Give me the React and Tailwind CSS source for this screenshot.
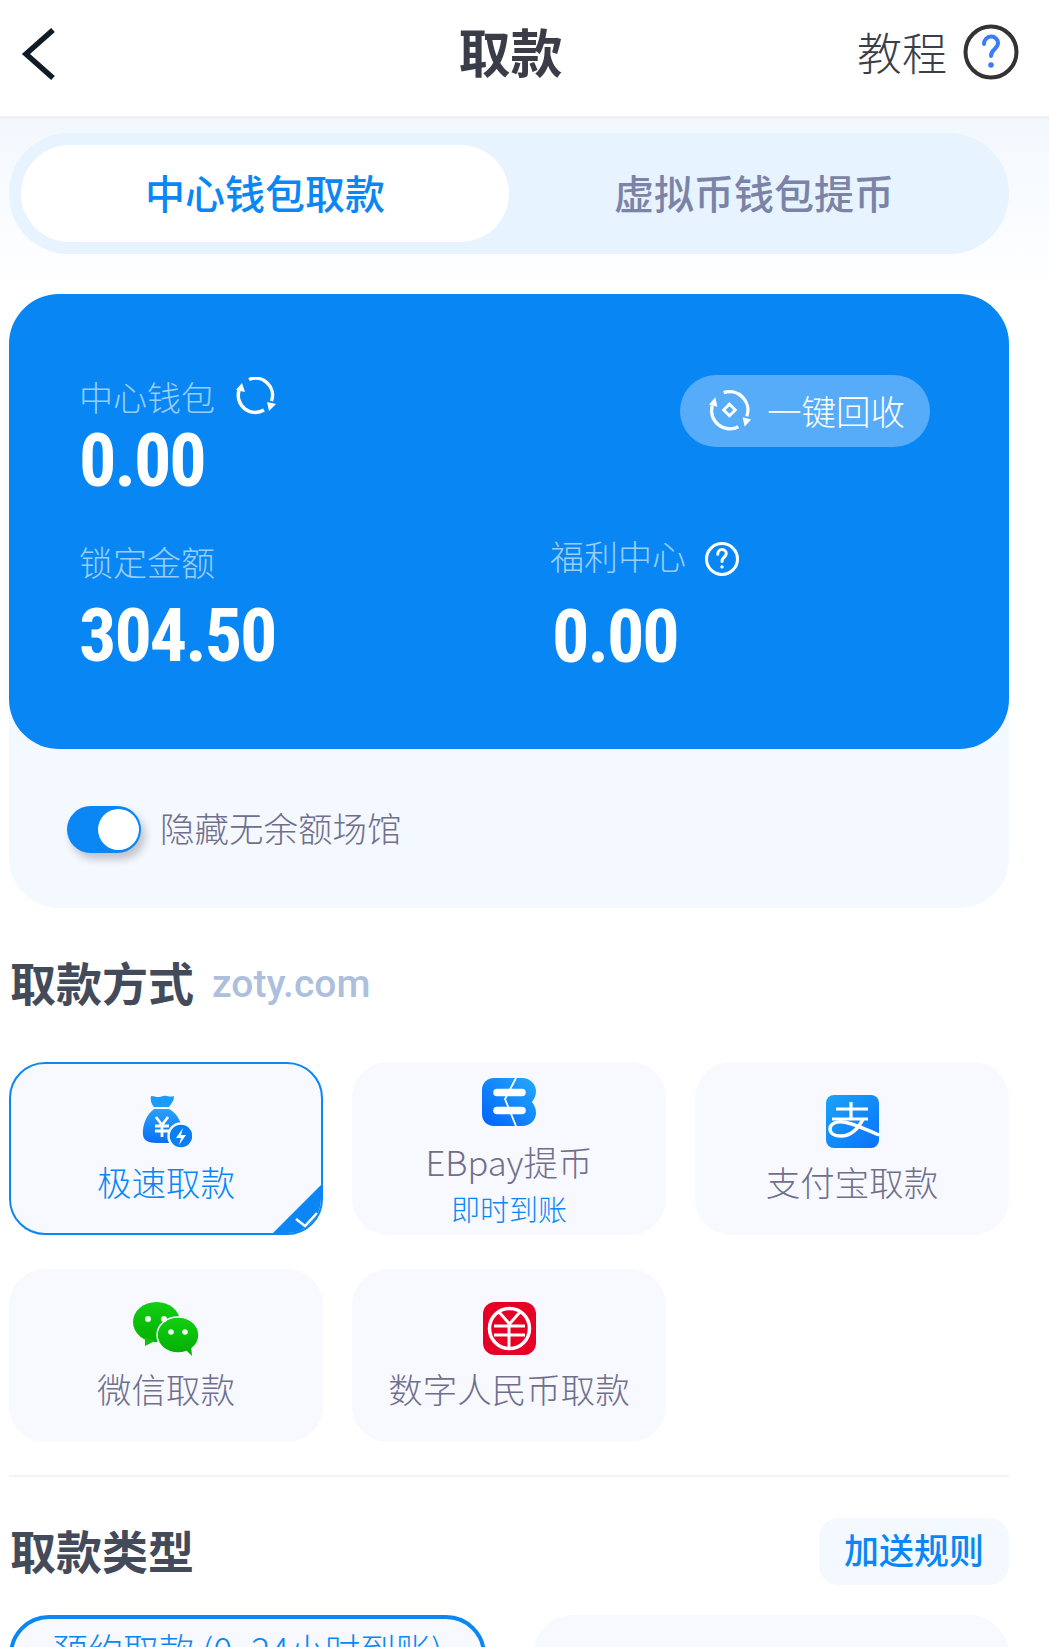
import React from "react";

const cjk = "font-['Noto_Sans_CJK_SC','Noto_Sans',sans-serif]";
const num = "font-['Liberation_Sans_Narrow','Roboto_Condensed','Liberation_Sans',sans-serif]";

const BackIcon = () => (
  <svg width="36" height="54" viewBox="0 0 36 54" fill="none">
    <path d="M32 3 L5 27 L32 51" stroke="#0f1c26" strokeWidth="5.5" />
  </svg>
);

const HelpIcon = ({ size, ring, mark, stroke }) => (
  <svg width={size} height={size} viewBox="0 0 56 56" fill="none">
    <circle cx="28" cy="28" r="25.5" stroke={ring} strokeWidth={stroke} />
    <path d="M21 20c0-4 3-7.500 7-7.500s7 3 7 6.500c0 6-7 6-7 13" stroke={mark} strokeWidth={stroke} strokeLinecap="round" />
    <circle cx="28" cy="41" r="2.800" fill={mark} />
  </svg>
);

const RefreshIcon = () => (
  <svg width="40" height="40" viewBox="0 0 40 40" fill="none">
    <path d="M13 2.500A17 17 0 0 1 35.500 24" stroke="#fff" strokeWidth="3.500" />
    <path d="M28 33A17 17 0 0 1 3 13.500" stroke="#fff" strokeWidth="3.500" />
    <path d="M31 25L40 27L33 34z" fill="#fff" />
    <path d="M9 15L0 13L6 6z" fill="#fff" />
  </svg>
);

const RecycleIcon = () => (
  <svg width="42" height="42" viewBox="0 0 40 40" fill="none">
    <path d="M14 2.500A17.500 17.500 0 0 1 36 25" stroke="#fff" strokeWidth="3.200" />
    <path d="M28 35A17.500 17.500 0 0 1 3 15" stroke="#fff" strokeWidth="3.200" />
    <path d="M32 26L40 28L34 35z" fill="#fff" />
    <path d="M8 16L0 14L6 7z" fill="#fff" />
    <path d="M19.500 13.500l5.500 5.500-5.500 5.500-5.500-5.500z" stroke="#fff" strokeWidth="2.800" />
  </svg>
);

const BagIcon = () => (
  <svg width="52" height="54" viewBox="-2 0 52 54" fill="none">
    <defs>
      <linearGradient id="bag" x1="0" y1="0" x2="0" y2="1">
        <stop offset="0" stopColor="#2aa0fb" />
        <stop offset="1" stopColor="#0a6ff2" />
      </linearGradient>
    </defs>
    <path d="M9 1c4 0 5 1.500 8 1s5-2 8-1 6 .500 7 0c0 5-3 8-5 11H12C10 10 8 5 9 1z" fill="#1b9bfb" />
    <path d="M12 14h15c8 4 15 16 13 26-1 7-8 8-17 8-10 0-21 1-22-8C0 30 5 19 12 14z" fill="url(#bag)" />
    <path d="M14 22l6 8 6-8M20 30v12M13 31h14M13 36h14" stroke="#fff" strokeWidth="2.800" />
    <circle cx="39" cy="41" r="12.500" fill="#0a7ff2" stroke="#f7f9ff" strokeWidth="2.500" />
    <path d="M41 33l-7 10h5l-2 7 7-10h-5z" fill="#fff" />
  </svg>
);

const EbIcon = () => (
  <svg width="54" height="48" viewBox="0 0 54 48" fill="none">
    <defs>
      <linearGradient id="eb" x1="0" y1="1" x2="1" y2="0">
        <stop offset="0" stopColor="#0062ff" />
        <stop offset="1" stopColor="#26a9fb" />
      </linearGradient>
    </defs>
    <path d="M12 0h28c8 0 14 6 14 13 0 5-2 8-4 11 2 3 4 6 4 11 0 7-6 13-14 13H12C5 48 0 43 0 36V12C0 5 5 0 12 0z" fill="url(#eb)" />
    <path d="M15 14.500h25M15 32.500h25" stroke="#fff" strokeWidth="7.500" strokeLinecap="round" />
    <path d="M34 0L23 21l11 27" stroke="#fff" strokeWidth="1.800" />
  </svg>
);

const AlipayIcon = () => (
  <svg width="53" height="53" viewBox="0 0 53 53" fill="none">
    <defs>
      <linearGradient id="ali" x1="0" y1="0" x2="1" y2="1">
        <stop offset="0" stopColor="#1aa4f7" />
        <stop offset="1" stopColor="#0a72fb" />
      </linearGradient>
    </defs>
    <rect width="53" height="53" rx="8" fill="url(#ali)" />
    <path d="M10 14h32M25 7v17M6 24h36" stroke="#fff" strokeWidth="3.200" />
    <path d="M37 24c-4 9-12 17-22 17-7 0-11-3-11-7 0-5 6-8 13-7 10 1 24 8 36 13" stroke="#fff" strokeWidth="3.400" />
  </svg>
);

const WechatIcon = () => (
  <svg width="66" height="54" viewBox="0 0 66 54" fill="none">
    <defs>
      <linearGradient id="wx" x1="0" y1="0" x2="0" y2="1">
        <stop offset="0" stopColor="#12cf12" />
        <stop offset="1" stopColor="#04b004" />
      </linearGradient>
    </defs>
    <ellipse cx="23.500" cy="20" rx="23.500" ry="20" fill="url(#wx)" />
    <path d="M12 35l0 9 10-5z" fill="#0cc00c" />
    <ellipse cx="45" cy="33" rx="21" ry="18" fill="url(#wx)" stroke="#f7f9ff" strokeWidth="1.500" />
    <path d="M53 48l6 6-1-10z" fill="#04b004" />
    <circle cx="15" cy="17" r="3" fill="#eefbee" />
    <circle cx="31" cy="17" r="3" fill="#eefbee" />
    <circle cx="38" cy="30" r="2.800" fill="#eefbee" />
    <circle cx="52" cy="30" r="2.800" fill="#eefbee" />
  </svg>
);

const DcepIcon = () => (
  <svg width="53" height="53" viewBox="0 0 53 53" fill="none">
    <rect width="53" height="53" rx="12" fill="#e60026" />
    <circle cx="26.500" cy="26.500" r="20" stroke="#fff" strokeWidth="3.500" />
    <path d="M16 10l10.500 12L37 10M26 22v23M11 24h31M11 33h31" stroke="#fff" strokeWidth="3" />
  </svg>
);

const MethodCard = ({ icon, label, sub, active }) => (
  <div
    className={`relative h-[173px] rounded-[36px] overflow-hidden bg-[#f7f9ff] flex flex-col items-center ${
      active ? "border-2 border-[#0a87f5] pt-[31px]" : sub ? "pt-[13px]" : "pt-[33px]"
    }`}
  >
    <div className="h-[53px] flex items-center justify-center">{icon}</div>
    <div className={`mt-[11px] text-[34.5px] leading-[44px] font-light ${active ? "text-[#0a87f5]" : "text-[#6f6f8c]"}`}>{label}</div>
    {sub && <div className="mt-[7px] text-[29px] leading-[36px] font-light text-[#0a87f5]">{sub}</div>}
    {active && (
      <svg className="absolute right-0 bottom-0" width="48" height="48" viewBox="0 0 48 48">
        <path d="M48 0V48H0z" fill="#0a87f5" />
        <path d="M23 34l9 7 12-13" stroke="#fff" strokeWidth="2.500" fill="none" />
      </svg>
    )}
  </div>
);

const Label = ({ children }) => (
  <span className="text-[34px] leading-[40px] font-light text-white/60">{children}</span>
);

const Amount = ({ children }) => (
  <div className={`${num} text-[74px] leading-[74px] font-bold tracking-[-2px] text-white`}>{children}</div>
);

const App = () => {
  return (
    <div className={`${cjk} w-[1049px] h-[1647px] overflow-hidden bg-white`}>
      <header className="h-[119px] border-b-[3px] border-[#eef0f2] grid grid-cols-[1fr_auto_1fr] items-center pl-[21px] pr-[30px]">
        <div className="mb-[8px]">
          <BackIcon />
        </div>
        <div className="mr-[19px] text-center text-[52px] leading-[60px] font-bold text-[#3a3d47] mb-[14px]">取款</div>
        <div className="flex items-center justify-end gap-[16px] mb-[12px]">
          <span className="text-[45px] leading-[56px] font-light text-[#3b3e48]">教程</span>
          <HelpIcon size={56} ring="#333333" mark="#3b7cff" stroke={4} />
        </div>
      </header>

      <main className="w-[1018px] px-[9px]">
        <div className="-mx-[9px] w-[1049px] px-[9px] pt-[14px] h-[175px] bg-gradient-to-b from-[#f3f8fe] to-white">
          <div className="w-[1000px] h-[121px] rounded-[60px] bg-[#e7f3ff] flex items-center pl-[12px]">
            <div className="w-[488px] h-[97px] pb-[4px] rounded-[49px] bg-white flex items-center justify-center text-[40px] font-medium text-[#0a87f5]">
              中心钱包取款
            </div>
            <div className="flex-1 pr-[10px] pb-[4px] text-center text-[40px] font-medium text-[#7b83a6]">虚拟币钱包提币</div>
          </div>
        </div>

        <section className="w-[1000px] h-[614px] rounded-[50px] bg-[#f4f8ff]">
          <div className="h-[455px] rounded-[50px] bg-[#0887f4] pl-[70px] pr-[79px] pt-[81px]">
            <div className="flex justify-between items-start">
              <div>
                <div className="flex items-center gap-[21px] h-[44px] ">
                  <Label>中心钱包</Label>
                  <RefreshIcon />
                </div>
                <div className="mt-[5px]">
                  <Amount>0.00</Amount>
                </div>
              </div>
              <div className="w-[250px] h-[72px] rounded-[36px] bg-[#56acf9] flex items-center pl-[29px] gap-[16px]">
                <RecycleIcon />
                <span className="pb-[3px] text-[34.5px] leading-[40px] font-light text-white">一键回收</span>
              </div>
            </div>
            <div className="grid grid-cols-[471px_1fr] mt-[44px]">
              <div>
                <div className="h-[40px] flex items-center">
                  <Label>锁定金额</Label>
                </div>
                <div className="mt-[17px]">
                  <Amount>304.50</Amount>
                </div>
              </div>
              <div className="-mt-[6px]">
                <div className="h-[40px] flex items-center gap-[19px]">
                  <Label>福利中心</Label>
                  <div className="mt-[6px]">
                    <HelpIcon size={34} ring="#ffffff" mark="#ffffff" stroke={5} />
                  </div>
                </div>
                <div className="mt-[24px] ml-[2px]">
                  <Amount>0.00</Amount>
                </div>
              </div>
            </div>
          </div>
          <div className="flex items-center gap-[19px] pl-[58px] mt-[56px]">
            <div className="w-[74px] h-[47px] rounded-[24px] bg-[#0a87f5] flex items-center justify-end pr-[2px] shadow-[4px_6px_8px_rgba(0,0,0,0.22)]">
              <div className="w-[41px] h-[41px] rounded-full bg-white" />
            </div>
            <span className="pb-[4px] text-[34.5px] leading-[44px] font-light text-[#6f6f8c]">隐藏无余额场馆</span>
          </div>
        </section>

        <div className="flex items-center gap-[18px] pl-[1px] mt-[46px] h-[60px]">
          <span className="pb-[6px] text-[46px] leading-[60px] font-bold text-[#434a5a]">取款方式</span>
          <span className="font-['Roboto',sans-serif] text-[39px] font-medium text-[#adbfdd]">zoty.com</span>
        </div>

        <div className="w-[1000px] grid grid-cols-3 gap-x-[29px] gap-y-[34px] mt-[48px]">
          <MethodCard icon={<BagIcon />} label="极速取款" active />
          <MethodCard icon={<EbIcon />} label="EBpay提币" sub="即时到账" />
          <MethodCard icon={<AlipayIcon />} label="支付宝取款" />
          <MethodCard icon={<WechatIcon />} label="微信取款" />
          <MethodCard icon={<DcepIcon />} label="数字人民币取款" />
        </div>

        <div className="w-[1000px] h-[2px] bg-[#f3f4f8] mt-[33px]" />

        <div className="w-[1000px] flex items-center justify-between mt-[41px] h-[67px]">
          <span className="pl-[1px] pb-[6px] text-[46px] leading-[60px] font-bold text-[#434a5a]">取款类型</span>
          <div className="w-[190px] h-[67px] pb-[4px] rounded-[20px] bg-[#f4f9ff] flex items-center justify-center text-[35px] font-medium text-[#0a87f5]">
            加送规则
          </div>
        </div>

        <div className="w-[1000px] grid grid-cols-2 gap-x-[47px] mt-[30px]">
          <div className="h-[120px] rounded-[40px] border-[4px] border-[#0a87f5] bg-[#f7f9ff] flex justify-center pt-[8px] text-[35.5px] leading-[44px] font-light text-[#0a87f5]">
            预约取款 (0~24小时到账)
          </div>
          <div className="h-[120px] rounded-[40px] bg-[#f7f9ff]" />
        </div>
      </main>
    </div>
  );
};

export default App;
